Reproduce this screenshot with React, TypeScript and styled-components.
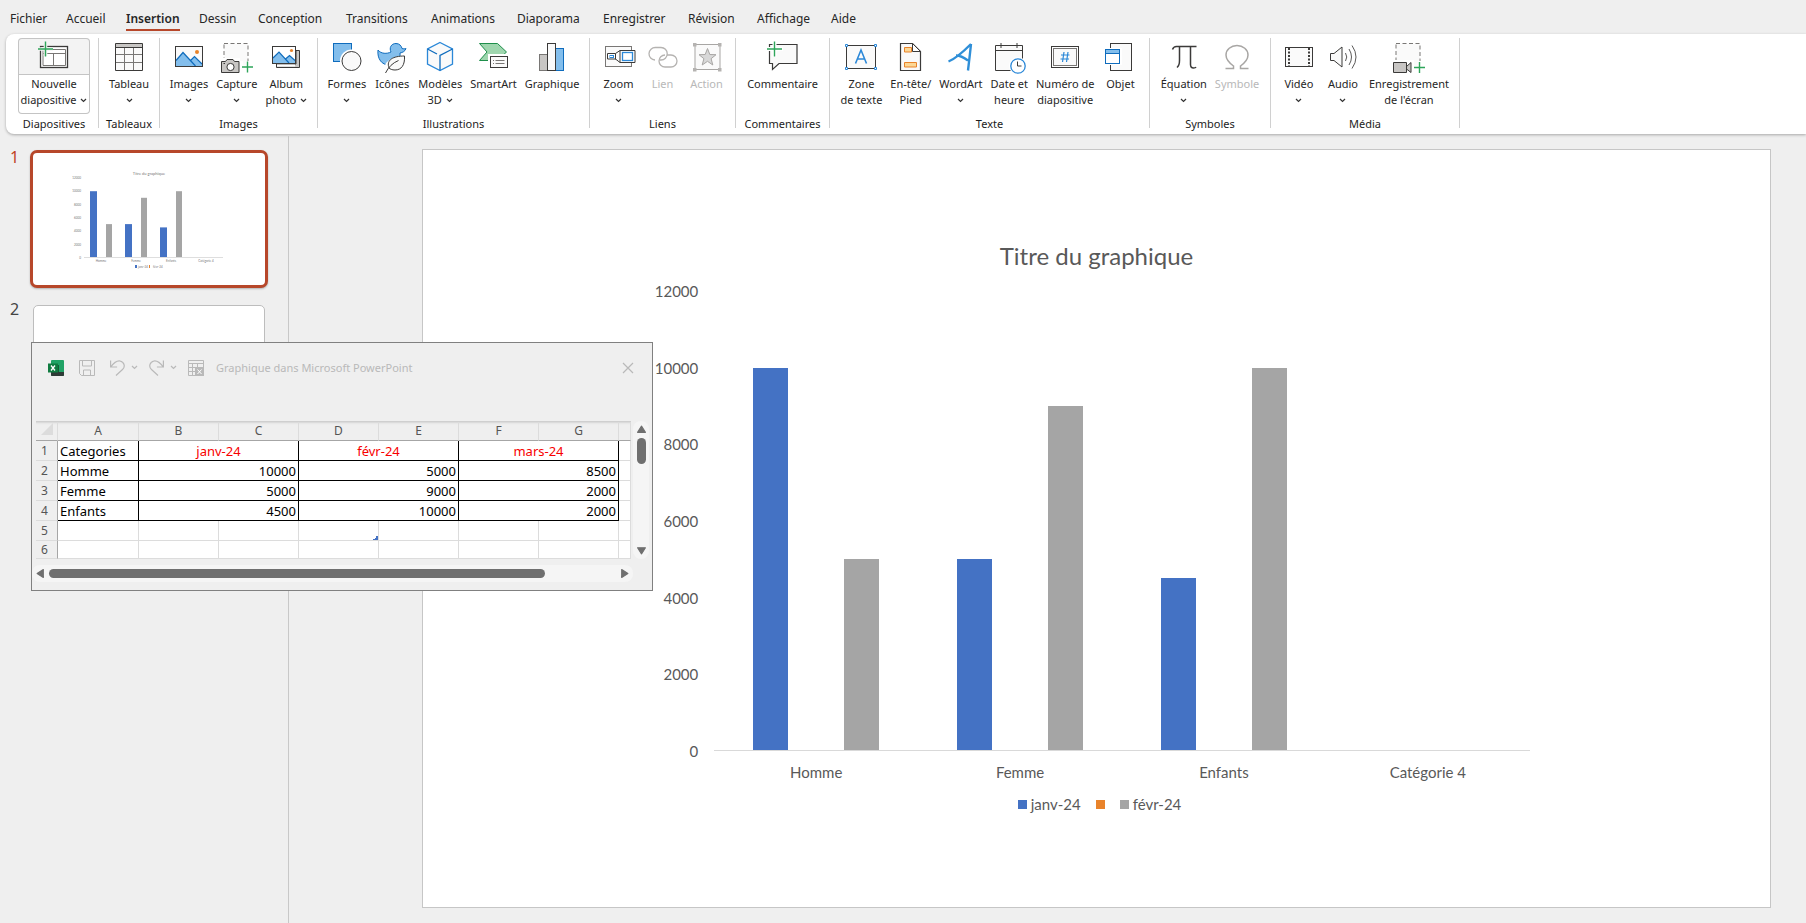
import React from "react";
import styled, { createGlobalStyle, css } from "styled-components";

const uiFont = `"Noto Sans", "Open Sans", sans-serif`;
const docFont = `Lato, "Open Sans", sans-serif`;

const Global = createGlobalStyle`
  * { box-sizing: border-box; }
  body { margin: 0; background: #efefef; color: #262626; font-family: ${uiFont}; }
  button { font: inherit; color: inherit; background: none; border: 0; padding: 0; }
`;

/* ---------- Shell ---------- */

const Page = styled.div`
  display: flex;
  flex-direction: column;
  min-height: 100vh;
`;

const Tabs = styled.nav`
  display: grid;
  grid-template-columns: 56px 60px 73px 59px 88px 85px 86px 86px 85px 69px 74px auto;
  justify-items: start;
  height: 34px;
  padding: 9px 10px 0;
`;

const Tab = styled.button<{ $active?: boolean }>`
  height: 22px;
  font-size: 12px;
  line-height: 20px;
  white-space: nowrap;
  border-bottom: 2px solid ${(p) => (p.$active ? "#b7472a" : "transparent")};
  font-weight: ${(p) => (p.$active ? 600 : 400)};
`;

const Ribbon = styled.div`
  display: flex;
  align-items: stretch;
  height: 100px;
  margin-left: 6px;
  padding: 4px 0 6px 4px;
  background: #fff;
  border-radius: 8px 0 0 8px;
  box-shadow: 0 1px 3px rgba(0, 0, 0, 0.3);
`;

const Group = styled.section<{ $w: number }>`
  display: flex;
  flex-direction: column;
  align-items: center;
  flex: none;
  width: ${(p) => p.$w}px;
  border-right: 1px solid #d0d0d0;
`;

const GroupItems = styled.div`
  display: flex;
  height: 76px;
`;

const GroupName = styled.div`
  font-size: 11px;
  line-height: 16px;
  margin-top: 2px;
  text-align: center;
  color: #1c1c1c;
`;

const Tool = styled.button<{ $framed?: boolean }>`
  display: flex;
  flex-direction: column;
  align-items: center;
  flex: none;
  min-width: 44px;
  height: 76px;
  padding: 0 4px;
  font-size: 11px;
  line-height: 16px;
  white-space: nowrap;
  border-radius: 4px;
  &:disabled { color: #b8b8b8; }
  ${(p) =>
    p.$framed &&
    css`
      padding: 0 3px;
      box-shadow: inset 0 0 0 1px #c4c4c4;
      background: linear-gradient(#f3f3f3 36px, #c4c4c4 36px, #c4c4c4 37px, #fff 37px);
    `}
`;

const ToolIcon = styled.svg`
  flex: none;
  width: 32px;
  height: 32px;
  margin: 3px 0;
  overflow: visible;
`;

const Line = styled.span`
  display: flex;
  align-items: center;
  height: 16px;
  gap: 4px;
`;

const Caret = ({ color = "#333" }: { color?: string }) => (
  <svg width="7" height="5" viewBox="0 0 7 5" fill="none" stroke={color} strokeWidth="1.2">
    <path d="M1 1l2.5 2.5L6 1" />
  </svg>
);

/* ---------- Ribbon drawings ---------- */

const dark = "#3b3a39";
const blue = "#0f6cbd";
const sky = "#83beec";
const green = "#2ea55a";

const Plus = ({ x, y, r }: { x: number; y: number; r: number }) => (
  <path d={`M${x - r} ${y}h${2 * r}M${x} ${y - r}v${2 * r}`} stroke={green} strokeWidth="1.4" />
);

const icons: Record<string, React.ReactNode> = {
  slide: (
    <>
      <rect x="2.5" y="5.5" width="27" height="21" fill="#fff" stroke={dark} strokeWidth="1.3" />
      <path d="M5 8.5h22.5v16H5zM5 12.5h22.5M15.5 12.5v12" fill="none" stroke="#797775" />
      <path d="M0 8h15M7.5 0v15" stroke="#f3f3f3" strokeWidth="3.6" />
      <Plus x={7.5} y={8} r={7.5} />
    </>
  ),
  table: (
    <>
      <rect x="2.5" y="2.5" width="27" height="27" fill="#fafafa" />
      <rect x="2.5" y="2.5" width="27" height="4" fill="#c8c6c4" />
      <path d="M2.5 13.5h27M2.5 21.5h27M11.5 6.5v23M20.5 6.5v23" stroke="#797775" />
      <path d="M2.5 2.5h27v27h-27zM2.5 6.5h27" fill="none" stroke={dark} />
    </>
  ),
  image: (
    <>
      <rect x="2.5" y="5.5" width="27" height="20" fill="#fafafa" />
      <path d="M3 19.5L10 11.5l7.5 8 4-4 7.5 7.5V25H3z" fill={sky} />
      <path d="M3 19.5L10 11.5 22.5 25M17.5 19.5l4-4 7.5 7.5" fill="none" stroke={blue} strokeWidth="1.2" />
      <circle cx="24" cy="11" r="2" fill="#e8832a" />
      <rect x="2.5" y="5.5" width="27" height="20" fill="none" stroke={dark} />
    </>
  ),
  capture: (
    <>
      <rect x="3" y="2.5" width="24" height="24" fill="#fafafa" stroke="#797775" strokeDasharray="4 2.5" />
      <path d="M0 17h19v3h3v12H0z" fill="#fff" />
      <path d="M.5 20.5h4l1.5-2h6l1.5 2h4.5v11H.5z" fill="#c8c6c4" stroke={dark} />
      <circle cx="9.5" cy="26" r="3.6" fill="#fff" stroke={dark} />
      <path d="M2.5 22.5h1.5" stroke={dark} />
      <path d="M20 26h12M26.5 20v12" stroke="#fff" strokeWidth="3.5" />
      <Plus x={26.5} y={26} r={5.5} />
    </>
  ),
  album: (
    <>
      <path d="M6.5 23v3.5h23v-17H26V23z" fill="#c8c6c4" stroke={dark} />
      <path d="M7 24.500h18" stroke="#fff" strokeWidth="2" />
      <rect x="2.5" y="5.5" width="23" height="17" fill="#fff" />
      <path d="M3 17l6-6 6.5 7 4-3.500 5.500 5V22H3z" fill={sky} />
      <path d="M3 17l6-6 10 11M15.5 18l4-3.500 5.500 5" fill="none" stroke={blue} strokeWidth="1.2" />
      <circle cx="21.5" cy="9.5" r="1.6" fill="#e8832a" />
      <rect x="2.5" y="5.5" width="23" height="17" fill="none" stroke={dark} />
    </>
  ),
  shapes: (
    <>
      <rect x="2.5" y="2.5" width="18" height="18" fill={sky} stroke={blue} />
      <circle cx="20.5" cy="20" r="11.5" fill="#fff" />
      <circle cx="20.5" cy="20" r="9.5" fill="#fafafa" stroke={dark} />
    </>
  ),
  duck: (
    <>
      <path
        d="M2 9c3 4 9 4 13 2-2-4 0-8.5 5-8.5 3.5 0 5.5 2.5 6 5 1.500.6 3 .3 4 0-1 3-3.5 4-6 4.5 1 8-5 12-11 12-7 0-12-6-11-15z"
        fill={sky}
        stroke={blue}
      />
      <path d="M8 32c2-3-1-7 3-11s9-5 19-7c0 9-3 17-11 17-3 0-4-.5-5-1l-2 3z" fill="#fff" />
      <path d="M13 27c-3-8 4-12 15.5-12 .5 9-3 14-9.5 14-3 0-5-1-6-2zM9.5 32c3-6 7-10 13-12.500" fill="#fafafa" stroke={dark} />
    </>
  ),
  cube: (
    <>
      <path d="M16 1.5L28.5 8v15L16 29.5 3.5 23V8z" fill="#fafafa" stroke="#2b88d8" strokeWidth="1.3" />
      <path d="M3.5 8l9.500 5M28.5 8L16 14.5v15" fill="none" stroke={blue} strokeWidth="1.3" />
    </>
  ),
  smartart: (
    <>
      <path d="M2.5 2.5h18l9 8.500-9 8.500h-18L10 11z" fill="#9ed6ae" stroke="#1f8f4b" />
      <rect x="11" y="13" width="22" height="16" fill="#fff" />
      <rect x="13.5" y="15.5" width="17" height="11" fill="#fafafa" stroke={dark} />
      <path d="M16 19.5h1M16 22.5h1M18.5 19.5h9M18.5 22.5h9" stroke="#797775" />
    </>
  ),
  chart: (
    <>
      <rect x="3.5" y="13.5" width="8" height="16" fill="#c8c6c4" stroke="#797775" />
      <rect x="19.5" y="7.5" width="8" height="22" fill={sky} stroke={blue} />
      <rect x="11.5" y="2.5" width="8" height="27" fill="#fafafa" stroke={dark} />
    </>
  ),
  zoom: (
    <>
      <rect x="2.5" y="5.5" width="26" height="20" fill="#fafafa" stroke="#797775" />
      <path d="M4.500 12.500h8l4.500-3h15v12H17l-4.500-3.500h-8z" fill="#fff" stroke={dark} />
      <path d="M12.5 12.500v6M17 9.500v12" stroke={dark} />
      <rect x="7" y="14.500" width="3.500" height="2" fill="#fff" stroke="#2b88d8" />
      <rect x="19.5" y="11.500" width="10" height="8" fill="#fff" stroke="#2b88d8" strokeWidth="1.3" />
    </>
  ),
  link: (
    <g fill="none" stroke="#b5b3b1" strokeWidth="1.3">
      <path d="M8 19A6 6 0 0 1 8.5 6.5h5.5a6.2 6.2 0 0 1 0 12.5h-1.500" />
      <path d="M20 14h4a5.700 5.700 0 0 1 0 12h-6a6 6 0 0 1 0-12" />
    </g>
  ),
  action: (
    <>
      <rect x="4" y="3.5" width="25" height="25" fill="#fafafa" stroke="#a8a6a4" />
      <path d="M2 2h3.5v3.5H2zM27 2h3.5v3.5H27zM2 27h3.5v3.5H2zM27 27h3.5v3.5H27z" fill="#b5b3b1" />
      <path
        d="M16.5 7.5l2.300 6 6.200.2-4.900 4 1.700 6.300-5.300-3.700-5.300 3.700 1.700-6.300-4.900-4 6.200-.2z"
        fill="#d8d8d8"
        stroke="#a8a6a4"
      />
    </>
  ),
  comment: (
    <>
      <path d="M2.5 3.5H30v19H12l-6.500 6v-6h-3z" fill="#fafafa" stroke={dark} strokeWidth="1.2" />
      <path d="M-1 8h17M7.5-1v17" stroke="#fff" strokeWidth="4" />
      <Plus x={7.5} y={8} r={7.5} />
    </>
  ),
  textbox: (
    <>
      <rect x="1.5" y="4.5" width="29" height="23" fill="#fafafa" stroke={dark} />
      <path d="M10.5 22.5L16 9l5.500 13.500M12.5 18h7" fill="none" stroke="#2b88d8" strokeWidth="1.6" />
      <path d="M.5 3.5h2v2h-2zM29.5 3.5h2v2h-2zM.5 26.5h2v2h-2zM29.5 26.5h2v2h-2z" fill="#fff" stroke="#2b88d8" />
    </>
  ),
  header: (
    <>
      <path d="M5.5 2.5h12l8 8v19h-20z" fill="#fafafa" stroke={dark} strokeWidth="1.2" />
      <path d="M9.5 6.5h7v4.500h-7zM9.5 21.5h12v4.500h-12z" fill="#fcd795" stroke="#e8832a" />
      <path d="M17.5 2.5v8h8z" fill="#fff" stroke={dark} />
    </>
  ),
  wordart: (
    <path d="M26 3C19 10 10 18 3.5 20.5M26 3c-1 10-2 18-3 26.500M11 14.500c5 0 8 2 12 5" fill="none" stroke="#2f8fd8" strokeWidth="2.4" />
  ),
  date: (
    <>
      <path d="M2.5 4.5h27v25h-27z" fill="#fafafa" stroke={dark} />
      <path d="M2.5 9.5h27M8 2v5M24 2v5" stroke={dark} />
      <circle cx="25" cy="25" r="9" fill="#fff" />
      <circle cx="25" cy="25" r="7.2" fill="#fff" stroke="#2b88d8" strokeWidth="1.3" />
      <path d="M24.5 20.5v4.500h4" fill="none" stroke={dark} />
    </>
  ),
  number: (
    <>
      <rect x="2.5" y="5.5" width="27" height="21" fill="#fff" stroke={dark} />
      <rect x="4.5" y="7.5" width="23" height="17" fill="#fafafa" stroke="#797775" />
      <path d="M15 11l-1.500 10M19 11l-1.500 10M12 14h8.500M11.5 18h8.500" stroke="#2b88d8" strokeWidth="1.2" />
    </>
  ),
  object: (
    <>
      <rect x="6.5" y="2.5" width="21" height="27" fill="#fafafa" stroke={dark} />
      <rect x="0" y="7" width="18" height="17" fill="#fff" />
      <rect x="1.5" y="8.5" width="14" height="14" fill="#fff" stroke={blue} />
      <path d="M2 9h13v3H2z" fill={sky} />
      <path d="M2 12.5h13" stroke={blue} />
    </>
  ),
  pi: (
    <path d="M4.5 8.500q1-3 4-3h20M11.5 5.500v14q0 5-2.500 7M22.5 5.500v18q0 3.500 3 3.500 2 0 2.500-1" fill="none" stroke={dark} strokeWidth="1.5" />
  ),
  omega: (
    <path d="M4.5 27.500h8v-2.500C7 21 5 18 5 14a11 9.500 0 0 1 22 0c0 4-2 7-7.500 11v2.500h8" fill="none" stroke="#a8a6a4" strokeWidth="1.5" />
  ),
  video: (
    <>
      <rect x="2.5" y="6.5" width="27" height="19" fill="#fafafa" stroke={dark} />
      <path d="M6 7v19M26 7v19" stroke={dark} strokeWidth="2" strokeDasharray="2 1.5" />
    </>
  ),
  audio: (
    <>
      <path d="M3.5 12.500h3.500l8-6.500v20l-8-6.500H3.500z" fill="#fafafa" stroke={dark} />
      <path d="M18.5 12q2.500 4 0 8M22 8q5 8 0 16M25 4.500q8 11.500 0 23" fill="none" stroke="#5b5a59" />
    </>
  ),
  record: (
    <>
      <rect x="3" y="2.5" width="24" height="24" fill="#fafafa" stroke="#797775" strokeDasharray="4 2.5" />
      <path d="M-1 19h22v14H-1z" fill="#fff" />
      <path d="M.5 21.5h13v10H.5zM13.5 25.500l4.500-4v10l-4.500-3.500z" fill="#c8c6c4" stroke={dark} />
      <path d="M21 26.500h13M26.5 20v13" stroke="#fff" strokeWidth="3.5" />
      <Plus x={26.5} y={26.5} r={5.5} />
    </>
  ),
};

type Item = { icon: string; lines: string[]; caret?: boolean; disabled?: boolean; framed?: boolean };
type GroupData = { name: string; w: number; items: Item[] };

const groups: GroupData[] = [
  { name: "Diapositives", w: 89, items: [{ icon: "slide", lines: ["Nouvelle", "diapositive"], caret: true, framed: true }] },
  { name: "Tableaux", w: 61, items: [{ icon: "table", lines: ["Tableau", ""], caret: true }] },
  {
    name: "Images",
    w: 158,
    items: [
      { icon: "image", lines: ["Images", ""], caret: true },
      { icon: "capture", lines: ["Capture", ""], caret: true },
      { icon: "album", lines: ["Album", "photo"], caret: true },
    ],
  },
  {
    name: "Illustrations",
    w: 272,
    items: [
      { icon: "shapes", lines: ["Formes", ""], caret: true },
      { icon: "duck", lines: ["Icônes"] },
      { icon: "cube", lines: ["Modèles", "3D"], caret: true },
      { icon: "smartart", lines: ["SmartArt"] },
      { icon: "chart", lines: ["Graphique"] },
    ],
  },
  {
    name: "Liens",
    w: 146,
    items: [
      { icon: "zoom", lines: ["Zoom", ""], caret: true },
      { icon: "link", lines: ["Lien"], disabled: true },
      { icon: "action", lines: ["Action"], disabled: true },
    ],
  },
  { name: "Commentaires", w: 94, items: [{ icon: "comment", lines: ["Commentaire"] }] },
  {
    name: "Texte",
    w: 320,
    items: [
      { icon: "textbox", lines: ["Zone", "de texte"] },
      { icon: "header", lines: ["En-tête/", "Pied"] },
      { icon: "wordart", lines: ["WordArt", ""], caret: true },
      { icon: "date", lines: ["Date et", "heure"] },
      { icon: "number", lines: ["Numéro de", "diapositive"] },
      { icon: "object", lines: ["Objet"] },
    ],
  },
  {
    name: "Symboles",
    w: 121,
    items: [
      { icon: "pi", lines: ["Équation", ""], caret: true },
      { icon: "omega", lines: ["Symbole"], disabled: true },
    ],
  },
  {
    name: "Média",
    w: 189,
    items: [
      { icon: "video", lines: ["Vidéo", ""], caret: true },
      { icon: "audio", lines: ["Audio", ""], caret: true },
      { icon: "record", lines: ["Enregistrement", "de l'écran"] },
    ],
  },
];

const RibbonTool = ({ item }: { item: Item }) => (
  <Tool $framed={item.framed} disabled={item.disabled}>
    <ToolIcon viewBox="0 0 32 32" fill="none">
      {icons[item.icon]}
    </ToolIcon>
    {item.lines.map((text, i) => (
      <Line key={i}>
        {text}
        {item.caret && i === item.lines.length - 1 && <Caret />}
      </Line>
    ))}
  </Tool>
);

/* ---------- Slide list ---------- */

const Work = styled.div`
  display: flex;
  flex: 1;
  position: relative;
  margin-top: 2px;
`;

const Side = styled.aside`
  flex: none;
  width: 289px;
  padding: 14px 20px 0 10px;
  border-right: 1px solid #c8c8c8;
`;

const SlideRow = styled.div`
  display: flex;
  gap: 10px;
  margin-bottom: 14px;
`;

const SlideNumber = styled.span<{ $active?: boolean }>`
  width: 10px;
  font-size: 16px;
  line-height: 14px;
  color: ${(p) => (p.$active ? "#c0431f" : "#444")};
`;

const Thumb = styled.button<{ $active?: boolean }>`
  width: 238px;
  height: 138px;
  background: #fff;
  border-radius: 7px;
  border: 3px solid #b7472a;
  box-shadow: 0 1px 2px rgba(0, 0, 0, 0.25);
  svg { display: block; }
  ${(p) =>
    !p.$active &&
    css`
      width: 232px;
      height: 132px;
      margin: 3px;
      border: 1px solid #bdbdbd;
      border-radius: 5px;
      box-shadow: none;
    `}
`;

/* ---------- Chart ---------- */

const seriesBlue = "#4472c4";
const seriesOrange = "#e9832b";
const seriesGray = "#a5a5a5";

const data = [
  { name: "Homme", values: [10000, 5000] },
  { name: "Femme", values: [5000, 9000] },
  { name: "Enfants", values: [4500, 10000] },
  { name: "Catégorie 4", values: [0, 0] },
];
const ticks = [12000, 10000, 8000, 6000, 4000, 2000, 0];

const Canvas = styled.main`
  display: flex;
  flex: 1;
  padding: 13px 35px 15px 133px;
`;

const Slide = styled.article`
  display: flex;
  flex-direction: column;
  align-items: center;
  flex: 1;
  padding: 93px 0;
  background: #fff;
  border: 1px solid #c6c6c6;
  font-family: ${docFont};
  color: #595959;
`;

const ChartTitle = styled.h1`
  margin: 0 0 22px;
  font-size: 24px;
  line-height: 26px;
  font-weight: 400;
`;

const Chart = styled.div`
  display: flex;
  flex: 1;
  width: 67%;
  min-height: 300px;
  padding-right: 18px;
  font-size: 15px;
`;

const Axis = styled.div`
  display: flex;
  flex-direction: column;
  justify-content: space-between;
  width: 53px;
  margin: -10px 16px -10px 0;
  line-height: 20px;
  text-align: right;
`;

const Plot = styled.div`
  display: flex;
  flex: 1;
  border-bottom: 1px solid #d9d9d9;
`;

const Cluster = styled.div`
  display: flex;
  flex: 1;
  align-items: flex-end;
  justify-content: space-between;
  padding: 0 39px;
`;

const Bar = styled.div<{ $color: string }>`
  width: 28%;
  background: ${(p) => p.$color};
`;

const Categories = styled.div`
  display: flex;
  width: 67%;
  padding: 11px 18px 12px 69px;
  font-size: 15px;
  line-height: 20px;
  text-align: center;
  span { flex: 1; }
`;

const Legend = styled.div`
  display: flex;
  gap: 15px;
  padding-left: 6px;
  font-size: 15px;
  line-height: 20px;
`;

const Key = styled.span<{ $color: string }>`
  display: flex;
  align-items: center;
  gap: 4px;
  &::before {
    content: "";
    width: 9px;
    height: 9px;
    background: ${(p) => p.$color};
  }
`;

const ThumbChart = () => (
  <svg width="232" height="132" viewBox="0 0 232 132" fontFamily="Lato, sans-serif" fontSize="3" fill="#777">
    <text x="116" y="22" fontSize="4" textAnchor="middle">Titre du graphique</text>
    {ticks.map((t, i) => (
      <text key={t} x="48" y={26 + i * 13.3} textAnchor="end">{t}</text>
    ))}
    <path d="M51 104.5h139" stroke="#dedede" />
    {data.map((d, i) => (
      <g key={d.name}>
        <rect x={57 + i * 35} y={104 - d.values[0] / 152} width="7" height={d.values[0] / 152} fill={seriesBlue} />
        <rect x={73 + i * 35} y={104 - d.values[1] / 152} width="6" height={d.values[1] / 152} fill={seriesGray} />
        <text x={68 + i * 35} y="109" textAnchor="middle">{d.name}</text>
      </g>
    ))}
    <rect x="102" y="112" width="2" height="3" fill={seriesBlue} />
    <text x="105" y="115">janv-24</text>
    <rect x="116" y="112" width="1" height="3" fill={seriesOrange} />
    <text x="120" y="115">févr-24</text>
  </svg>
);

/* ---------- Data sheet window ---------- */

const Sheet = styled.section`
  position: absolute;
  left: 31px;
  top: 206px;
  width: 622px;
  height: 249px;
  background: #efefef;
  border: 1px solid #808080;
`;

const SheetBar = styled.header`
  display: flex;
  align-items: center;
  height: 49px;
  padding: 0 18px 0 16px;
  color: #b9b9b9;
  font-size: 11px;
  line-height: 16px;
  svg { display: block; }
`;

const BarButtons = styled.div`
  display: flex;
  align-items: center;
  gap: 11px;
  margin-right: 12px;
`;

const Logo = styled.svg`
  margin-right: 4px;
`;

const BarButton = styled.button<{ $plain?: boolean }>`
  display: flex;
  align-items: center;
  gap: 6px;
  height: 18px;
  padding-right: ${(p) => (p.$plain ? 4 : 0)}px;
`;

const CloseButton = styled.button`
  margin-left: auto;
`;

const SheetBody = styled.div`
  display: flex;
  gap: 2px;
  margin-top: 29px;
  padding-left: 4px;
`;

const GridFrame = styled.div`
  width: 595px;
  height: 138px;
  border-top: 1px solid #cfcfcf;
  box-shadow: inset 0 3px 2px -2px #d4d4d4;
`;

const Grid = styled.table`
  table-layout: fixed;
  width: 595px;
  border-collapse: separate;
  border-spacing: 0;
  font-size: 13px;
  line-height: 18px;
  color: #000;
  tr { height: 20px; }
  thead tr { height: 19px; }
  tbody tr:last-child { height: 18px; }
  th, td {
    padding: 0;
    border-right: 1px solid #dcdcdc;
    border-bottom: 1px solid #dcdcdc;
    white-space: nowrap;
  }
  td { background: #fff; }
  th {
    color: #555;
    font-size: 12px;
    line-height: 16px;
    font-weight: 400;
  }
  thead th { border-bottom-color: #a6a6a6; }
  tbody th { border-right-color: #a6a6a6; padding: 1px 4px 0 0; }
`;

const Cell = styled.td<{ $kind: "name" | "date" | "value" }>`
  && {
    border-color: #000;
    padding: 1px 2px 0;
    color: ${(p) => (p.$kind === "date" ? "#f80000" : "#000")};
    text-align: ${(p) => ({ name: "left", date: "center", value: "right" })[p.$kind]};
  }
`;

const MarkedCell = styled.td`
  && { background: linear-gradient(135deg, #fff 50%, #4472c4 50%) right bottom / 5px 5px no-repeat #fff; }
`;

const Track = styled.div<{ $vertical?: boolean }>`
  display: flex;
  align-items: center;
  background: #f5f5f5;
  border-radius: 8px;
  ${(p) =>
    p.$vertical
      ? css`
          flex-direction: column;
          width: 16px;
          height: 138px;
          padding: 4px 0;
        `
      : css`
          width: 601px;
          height: 17px;
          margin-top: 6px;
          padding: 0 4px;
        `}
`;

const ScrollHandle = styled.div<{ $vertical?: boolean }>`
  width: ${(p) => (p.$vertical ? 9 : 496)}px;
  height: ${(p) => (p.$vertical ? 26 : 9)}px;
  margin: ${(p) => (p.$vertical ? "4px 0 auto" : "0 auto 0 4px")};
  border-radius: 5px;
  background: #6f6f6f;
`;

const Arrow = ({ d }: { d: string }) => (
  <svg width="9" height="9" viewBox="0 0 8 8" fill="#6f6f6f" stroke="#6f6f6f" strokeLinejoin="round">
    <path d={d} />
  </svg>
);

const rows = [
  ["Homme", "10000", "5000", "8500"],
  ["Femme", "5000", "9000", "2000"],
  ["Enfants", "4500", "10000", "2000"],
];

const DataSheet = () => (
  <Sheet>
    <SheetBar>
      <BarButtons>
        <Logo width="16" height="16" viewBox="0 0 16 16">
          <rect x="3" width="13" height="16" rx="1" fill="#21a366" />
          <path d="M3 12h13v3q0 1-1 1H4q-1 0-1-1z" fill="#2f3a36" />
          <rect y="3.5" width="10" height="9" fill="#107c41" />
          <path d="M3 5.500l4 5M7 5.500l-4 5" stroke="#fff" strokeWidth="1.3" />
          <path d="M10.5 5v7" stroke="#185c37" />
        </Logo>
        <BarButton $plain aria-label="Enregistrer">
          <svg width="16" height="16" viewBox="0 0 16 16" fill="none" stroke="#b9b9b9">
            <path d="M.5.5h15v15h-13l-2-2zM3.5.5v5.500h9V.5M4.5 15.500v-5.500h7v5.500" />
          </svg>
        </BarButton>
        <BarButton aria-label="Annuler">
          <svg width="15" height="16" viewBox="0 0 15 16" fill="none" stroke="#b9b9b9" strokeWidth="1.2">
            <path d="M.6.5v6.500h6.500M.8 6.800C4 2.500 7 .6 10 1c4.500 1 5.500 6 2.500 8.500L6 15.500" />
          </svg>
          <Caret color="#b9b9b9" />
        </BarButton>
        <BarButton aria-label="Rétablir">
          <svg width="15" height="16" viewBox="0 0 15 16" fill="none" stroke="#b9b9b9" strokeWidth="1.2">
            <path d="M14.4.5v6.500H7.900M14.200 6.800C11 2.500 8 .6 5 1 .5 2-.5 7 2.500 9.500L9 15.500" />
          </svg>
          <Caret color="#b9b9b9" />
        </BarButton>
        <BarButton aria-label="Modifier les données">
          <svg width="16" height="16" viewBox="0 0 16 16" fill="none" stroke="#b9b9b9">
            <path d="M7 15.500H.5V.5h15V7M.5 3.500h15M4.500 3.500v12M9.500 3.500V7M.5 7.500H7M.5 11.500H7" />
            <rect x="7.5" y="7.5" width="8" height="8" fill="#b9b9b9" />
            <path d="M9.500 9.500l4 4.500M13.500 9.500l-4 4.500" stroke="#fff" />
          </svg>
        </BarButton>
      </BarButtons>
      Graphique dans Microsoft PowerPoint
      <CloseButton aria-label="Fermer">
        <svg width="12" height="12" viewBox="0 0 12 12" stroke="#b9b9b9" strokeWidth="1.2">
          <path d="M1 1l10 10M11 1L1 11" />
        </svg>
      </CloseButton>
    </SheetBar>
    <SheetBody>
      <GridFrame>
        <Grid>
          <colgroup>
            <col width="22" />
            <col width="81" />
            {[1, 2, 3, 4, 5, 6].map((c) => (
              <col key={c} width="80" />
            ))}
            <col width="12" />
          </colgroup>
          <thead>
            <tr>
              <th>
                <svg width="12" height="12" viewBox="0 0 12 12">
                  <path d="M12 0v12H0z" fill="#dcdcdc" />
                </svg>
              </th>
              {"ABCDEFG".split("").map((c) => (
                <th key={c}>{c}</th>
              ))}
              <th />
            </tr>
          </thead>
          <tbody>
            <tr>
              <th>1</th>
              <Cell $kind="name">Categories</Cell>
              {["janv-24", "févr-24", "mars-24"].map((m) => (
                <Cell key={m} $kind="date" colSpan={2}>{m}</Cell>
              ))}
              <td />
            </tr>
            {rows.map(([name, ...values], r) => (
              <tr key={name}>
                <th>{r + 2}</th>
                <Cell $kind="name">{name}</Cell>
                {values.map((v, i) => (
                  <Cell key={i} $kind="value" colSpan={2}>{v}</Cell>
                ))}
                <td />
              </tr>
            ))}
            {[5, 6].map((n) => (
              <tr key={n}>
                <th>{n}</th>
                {[1, 2, 3, 4, 5, 6, 7, 8].map((c) => (n === 5 && c === 4 ? <MarkedCell key={c} /> : <td key={c} />))}
              </tr>
            ))}
          </tbody>
        </Grid>
      </GridFrame>
      <Track $vertical>
        <Arrow d="M4 1l3.500 5.500h-7z" />
        <ScrollHandle $vertical />
        <Arrow d="M4 7L.5 1.500h7z" />
      </Track>
    </SheetBody>
    <Track>
      <Arrow d="M1 4l5.500-3.500v7z" />
      <ScrollHandle />
      <Arrow d="M7 4L1.500.5v7z" />
    </Track>
  </Sheet>
);

const tabs = [
  "Fichier", "Accueil", "Insertion", "Dessin", "Conception", "Transitions",
  "Animations", "Diaporama", "Enregistrer", "Révision", "Affichage", "Aide",
];

export default function App() {
  return (
    <Page>
      <Global />
      <Tabs>
        {tabs.map((t) => (
          <Tab key={t} $active={t === "Insertion"}>{t}</Tab>
        ))}
      </Tabs>
      <Ribbon>
        {groups.map((g) => (
          <Group key={g.name} $w={g.w}>
            <GroupItems>
              {g.items.map((item) => (
                <RibbonTool key={item.icon} item={item} />
              ))}
            </GroupItems>
            <GroupName>{g.name}</GroupName>
          </Group>
        ))}
      </Ribbon>
      <Work>
        <Side>
          <SlideRow>
            <SlideNumber $active>1</SlideNumber>
            <Thumb $active aria-label="Diapositive 1">
              <ThumbChart />
            </Thumb>
          </SlideRow>
          <SlideRow>
            <SlideNumber>2</SlideNumber>
            <Thumb aria-label="Diapositive 2" />
          </SlideRow>
        </Side>
        <Canvas>
          <Slide>
            <ChartTitle>Titre du graphique</ChartTitle>
            <Chart>
              <Axis>
                {ticks.map((t) => (
                  <span key={t}>{t}</span>
                ))}
              </Axis>
              <Plot>
                {data.map((d) => (
                  <Cluster key={d.name}>
                    <Bar $color={seriesBlue} style={{ height: `${d.values[0] / 120}%` }} />
                    <Bar $color={seriesGray} style={{ height: `${d.values[1] / 120}%` }} />
                  </Cluster>
                ))}
              </Plot>
            </Chart>
            <Categories>
              {data.map((d) => (
                <span key={d.name}>{d.name}</span>
              ))}
            </Categories>
            <Legend>
              <Key $color={seriesBlue}>janv-24</Key>
              <Key $color={seriesOrange} />
              <Key $color={seriesGray}>févr-24</Key>
            </Legend>
          </Slide>
        </Canvas>
        <DataSheet />
      </Work>
    </Page>
  );
}
